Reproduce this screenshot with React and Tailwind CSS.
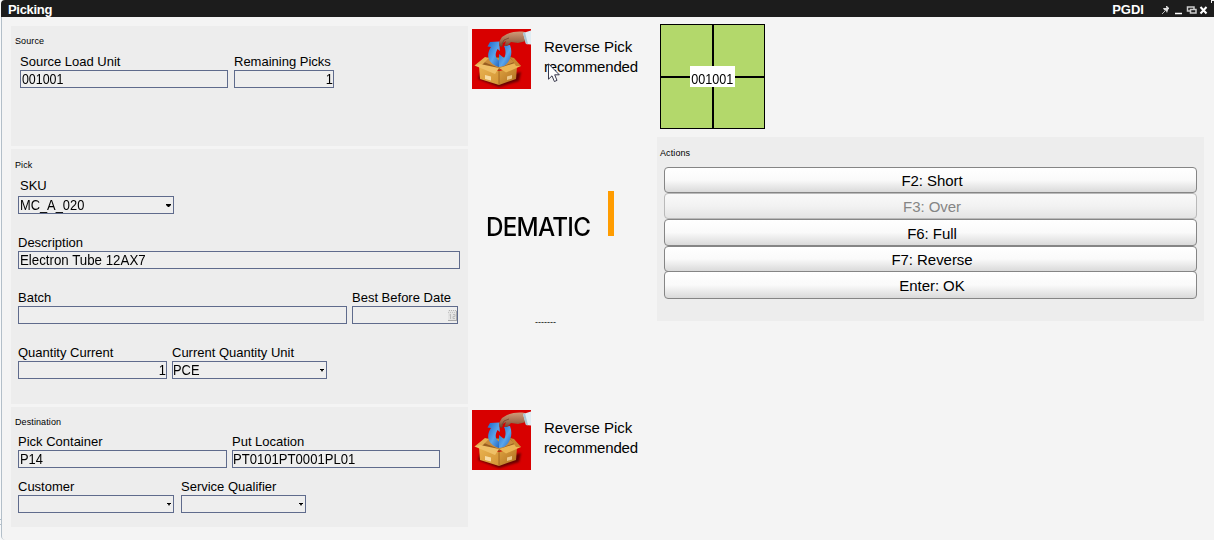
import React from "react";

function Field({
  label,
  value,
  width,
  align = "left",
  scale = "scale-x-[0.92]",
  caret = "",
  indent = "",
  labelIndent = "",
  icon = null,
}) {
  return (
    <div className="flex flex-col">
      <label className={`h-[17px] whitespace-nowrap text-[13px] leading-[17px] ${labelIndent}`}>{label}</label>
      <div className={`flex h-[18px] items-center border border-[#5f6b8c] bg-[#eeeeee] ${width}`}>
        <span
          className={`flex-1 whitespace-nowrap text-[14px] leading-4 ${scale} ${indent} ${
            align === "right" ? "origin-right text-right" : "origin-left text-left"
          }`}
        >
          {value}
        </span>
        {caret === "large" && (
          <svg className="mr-[2px] h-[3px] w-[5px] shrink-0" viewBox="0 0 5 3">
            <path d="M0 0H5V1L3 3H2L0 1Z" fill="#000" />
          </svg>
        )}
        {caret === "small" && (
          <svg className="mr-[2px] mt-px h-[3px] w-[4px] shrink-0" viewBox="0 0 4 3">
            <path d="M0 0H4V1H3L2.500 2.500H1.500L1 1H0Z" fill="#000" />
          </svg>
        )}
        {icon}
      </div>
    </div>
  );
}

function CalendarIcon() {
  return (
    <svg className="h-[11px] w-[9px] shrink-0" viewBox="0 0 9 11">
      <rect width="9" height="11" fill="#e4e4e4" />
      <path d="M0 10.500H9M8.500 1V11" stroke="#aaa" fill="none" />
      <path d="M1 0.500H8" stroke="#b5b5b5" strokeDasharray="1 1" />
      <path d="M0 2.500H8" stroke="#c4c4c4" strokeDasharray="1 1" />
      <path d="M2.500 4V9M1.500 5H3M5 4.500H7V6.500H5V8.500H7" stroke="#bcbcbc" fill="none" />
    </svg>
  );
}

function Panel({ title, className, children }) {
  return (
    <section className={`flex flex-col bg-[#ededed] ${className}`}>
      <h2 className="h-[11px] text-[9px] leading-[11px] tracking-[0.1px]">{title}</h2>
      {children}
    </section>
  );
}

function BoxIcon({ id }) {
  return (
    <svg className="h-[60px] w-[59px] shrink-0" viewBox="0 0 59 60">
      <defs>
        <linearGradient id={`${id}-left`} x1="0" y1="0" x2="1" y2="1">
          <stop offset="0" stopColor="#e9b350" />
          <stop offset="1" stopColor="#d39435" />
        </linearGradient>
        <linearGradient id={`${id}-right`} x1="0" y1="0" x2="1" y2="1">
          <stop offset="0" stopColor="#dda340" />
          <stop offset="1" stopColor="#b06d1f" />
        </linearGradient>
        <linearGradient id={`${id}-blue`} x1="0" y1="0" x2="1" y2="1">
          <stop offset="0" stopColor="#1f66c8" />
          <stop offset="0.55" stopColor="#5aa6ea" />
          <stop offset="1" stopColor="#1f60bb" />
        </linearGradient>
        <linearGradient id={`${id}-skin`} x1="0" y1="0" x2="0" y2="1">
          <stop offset="0" stopColor="#d09a78" />
          <stop offset="0.6" stopColor="#a06c4e" />
          <stop offset="1" stopColor="#6b3d28" />
        </linearGradient>
        <filter id={`${id}-blur`} x="-20%" y="-20%" width="140%" height="140%">
          <feGaussianBlur stdDeviation="1.3" />
        </filter>
      </defs>
      <rect width="59" height="60" fill="#d80000" />
      <path d="M6 50L27 58L47 52L49 43L28 48L8 44Z" fill="#600" filter={`url(#${id}-blur)`} />
      <path d="M8 36L16 28L39 28L46 35L27 41Z" fill="#9a5f20" />
      <path d="M12 33L17 29L38 29L42 33L27 39Z" fill="#c98c3c" />
      <path d="M27 38C17 35 13 27 19 18L15.500 17.500L18 13L27 12.500L28 22L25.500 20C22 26 24 30 28 32Z" fill={`url(#${id}-blue)`} />
      <path d="M27 38V25L32 29C34 26 34 21 32 17L38 16C41 24 39 32 32 37Z" fill={`url(#${id}-blue)`} />
      <path d="M7 37L27 42L27 56L8 50Z" fill={`url(#${id}-left)`} />
      <path d="M27 42L45 38L44 50L27 56Z" fill={`url(#${id}-right)`} />
      <path d="M2.500 36.500L13 28L17 29L9 37Z" fill="#e3ae52" />
      <path d="M2.500 36.500L8 35L27 39L23 45Z" fill="#efc067" />
      <path d="M27 39L43 34L49 37L34 43.500Z" fill="#ebb654" />
      <path d="M38 28L42 29L49 37L44 37Z" fill="#c88930" />
      <path d="M27 40V56" stroke="#91571a" strokeWidth="0.7" />
      <path d="M13 46L19 47.500V51.500L13 50Z" fill="#f8dda5" />
      <path d="M35 47.500L40 46V49.500L35 51Z" fill="#edc98a" />
      <path d="M53 3C46 2 40 3 35 5L30 8L27 13L27.500 17L30 18L31 14L34 12L32.500 16.500L35 17L39 13L46 14L54 12Z" fill={`url(#${id}-skin)`} />
      <path d="M30 15L32 11L37 9" stroke="#6b3f2b" strokeWidth="0.7" fill="none" />
      <path d="M51 4L59 1.500V15.500L54 15Z" fill="#e0edf3" />
      <path d="M51 4L53 3.300L56 15.200L54 15Z" fill="#a9c5d3" />
    </svg>
  );
}

function Hint({ id, children }) {
  return (
    <div className="flex h-[60px]">
      <BoxIcon id={id} />
      <p className="relative ml-[13px] mt-2 w-[110px] text-[15px] leading-5">
        Reverse Pick
        <br />
        <span className="tracking-[-0.18px]">recommended</span>
        {children}
      </p>
    </div>
  );
}

function Pointer() {
  return (
    <svg className="absolute left-[4px] top-[26px] h-[20px] w-[12px]" viewBox="0 0 12 20">
      <path d="M0.500 0.800V16.200L4 12.800L6.400 18.500L9 17.400L6.700 11.800H11.300Z" fill="#fff" stroke="#222238" strokeWidth="0.9" />
    </svg>
  );
}

const actions = [
  { label: "F2: Short", size: "h-[26px]" },
  { label: "F3: Over", size: "h-[26px]", disabled: true },
  { label: "F6: Full", size: "h-[27px]" },
  { label: "F7: Reverse", size: "h-[26px]" },
  { label: "Enter: OK", size: "-mt-px h-[28px]" },
];

export default function App() {
  return (
    <div className="relative h-[540px] w-[1214px] overflow-hidden bg-[#f8f9fa] pl-px font-['Liberation_Sans',Arial,sans-serif] text-black">
      <span className="absolute left-0 top-[519px] h-[6px] w-px border-y border-[#b3bfc9]" />
      <div className="flex h-[540px] flex-col overflow-hidden rounded-bl-[4px] rounded-tl-[4px] bg-[#f4f4f4]">
        <header className="flex h-[17px] shrink-0 items-center bg-[#1c1c1c] pl-[7px] pr-[6px] text-white">
          <h1 className="pt-[3px] text-[13px] font-bold leading-[14px] tracking-[-0.3px]">Picking</h1>
          <span className="ml-auto mr-[17px] pt-[3px] text-[13px] font-bold leading-[14px]">PGDI</span>
          <svg className="mt-[3px] h-[10px] w-[47px]" viewBox="0 0 47 10">
            <path d="M1 9L4 6" stroke="#bbb" />
            <path d="M2 3L5 3L6 1L8 3L7 5L6 8L5 6L3 5Z" fill="#ddd" />
            <path d="M5 1L8 4" stroke="#ddd" />
            <path d="M14 8.500H21" stroke="#fff" strokeWidth="1.500" />
            <path d="M26.500 2H33V6H26.500Z" stroke="#ccc" strokeWidth="1.500" fill="none" />
            <path d="M29.500 4.500H35V8H29.500Z" stroke="#ccc" strokeWidth="1.500" fill="#1c1c1c" />
            <path d="M39.500 2L45.500 8.500M45.500 2L39.500 8.500" stroke="#fff" strokeWidth="2" />
          </svg>
          <span className="absolute right-0 top-0 h-[3px] w-[3px] border-l border-t border-[#f4f4f4]" />
        </header>

        <main className="flex flex-1 rounded-bl-[4px] border-l border-[#b3bfc9] pl-[9px] pt-[9px]">
          <div className="flex w-[457px] flex-col gap-[3px]">
            <Panel title="Source" className="h-[120px] pl-1 pt-[10px]">
              <div className="mt-[6px] flex gap-[6px] pl-[5px]">
                <Field label="Source Load Unit" value="001001" width="w-[208px]" indent="pl-px" scale="scale-x-[0.89]" />
                <Field label="Remaining Picks" value="1" width="w-[100px]" align="right" />
              </div>
            </Panel>

            <Panel title="Pick" className="h-[255px] pl-1 pt-[11px]">
              <div className="flex flex-col gap-5 pl-[3px] pt-[6px]">
                <Field label="SKU" value="MC_A_020" width="w-[156px] mt-[2px]" labelIndent="pl-[2px]" indent="pl-px" caret="large" />
                <Field label="Description" value="Electron Tube 12AX7" width="w-[442px]" indent="pl-px" scale="scale-x-[0.95]" />
                <div className="flex gap-[5px]">
                  <Field label="Batch" value="" width="w-[329px]" />
                  <Field label="Best Before Date" value="" width="w-[106px]" icon={<CalendarIcon />} />
                </div>
                <div className="flex gap-[5px]">
                  <Field label="Quantity Current" value="1" width="w-[149px]" align="right" />
                  <Field label="Current Quantity Unit" value="PCE" width="w-[155px]" caret="small" />
                </div>
              </div>
            </Panel>

            <Panel title="Destination" className="h-[120px] pl-1 pt-[10px]">
              <div className="flex flex-col gap-[10px] pl-[3px] pt-[5px]">
                <div className="flex gap-[5px]">
                  <Field label="Pick Container" value="P14" width="w-[209px]" indent="pl-px" />
                  <Field label="Put Location" value="PT0101PT0001PL01" width="w-[208px]" scale="scale-x-[0.935]" />
                </div>
                <div className="flex gap-[7px]">
                  <Field label="Customer" value="" width="w-[156px]" caret="small" />
                  <Field label="Service Qualifier" value="" width="w-[125px]" caret="small" />
                </div>
              </div>
            </Panel>
          </div>

          <div className="ml-1 flex w-[185px] flex-col pt-[3px]">
            <Hint id="source">
              <Pointer />
            </Hint>
            <div className="mt-[102px] flex h-[45px] items-end pl-[14px]">
              <span className="w-[122px] origin-left scale-x-[0.95] font-['Inter',sans-serif] text-[25.500px] font-medium leading-[19px] tracking-[-0.8px]">
                DEMATIC
              </span>
              <span className="h-[45px] w-[6px] bg-[#ff9c00]" />
            </div>
            <div className="mt-[81px] pl-[63px] text-[9px] leading-[10px]">-------</div>
            <div className="mt-[83px]">
              <Hint id="destination" />
            </div>
          </div>

          <div className="flex w-[547px] flex-col">
            <div className="-mt-[2px] ml-[3px] grid h-[105px] w-[105px] grid-cols-[51px_50px] grid-rows-[51px_50px] gap-[2px] border border-black bg-black">
              <span className="col-start-1 row-start-1 bg-[#b3d86b]" />
              <span className="col-start-2 row-start-1 bg-[#b3d86b]" />
              <span className="col-start-1 row-start-2 bg-[#b3d86b]" />
              <span className="col-start-2 row-start-2 bg-[#b3d86b]" />
              <span className="z-10 col-span-2 col-start-1 row-span-2 row-start-1 flex h-[21px] w-[45px] items-center justify-center self-center justify-self-center bg-white">
                <span className="scale-x-[0.9] pt-[4px] text-[14px] leading-4">001001</span>
              </span>
            </div>
            <Panel title="Actions" className="mt-2 h-[184px] pl-[3px] pt-[11px]">
              <div className="mt-[8px] flex flex-col pl-1">
                {actions.map(({ label, size, disabled }) => (
                  <button
                    key={label}
                    disabled={disabled}
                    className={`flex w-[533px] items-center justify-center rounded-[4px] border bg-linear-to-b pl-[3px] pt-[2px] text-[15px] leading-4 tracking-[-0.05px] ${size} ${
                      disabled
                        ? "border-[#b9b9b9] from-[#f9f9f9] via-[#f2f2f2] to-[#e4e4e4] text-[#858585]"
                        : "border-[#858585] from-white via-[#fafafa] to-[#dadada]"
                    }`}
                  >
                    {label}
                  </button>
                ))}
              </div>
            </Panel>
          </div>
        </main>
      </div>
    </div>
  );
}
